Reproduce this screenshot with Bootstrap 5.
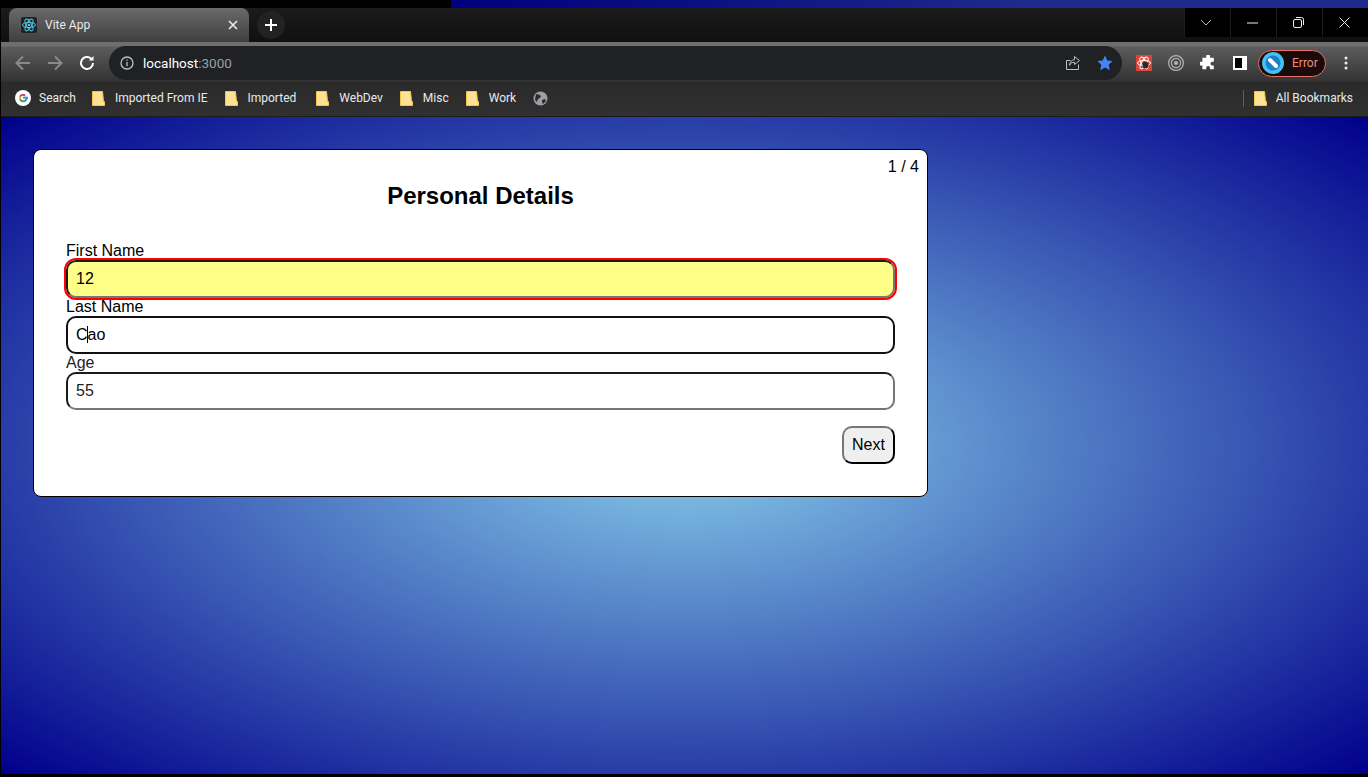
<!DOCTYPE html>
<html lang="en">
<head>
    <meta charset="UTF-8">
    <meta name="viewport" content="width=device-width, initial-scale=1.0">
    <title>Vite App</title>
    <link href="https://cdn.jsdelivr.net/npm/bootstrap@5.3.0/dist/css/bootstrap.min.css" rel="stylesheet">
    <script src="https://cdn.jsdelivr.net/npm/bootstrap@5.3.0/dist/js/bootstrap.bundle.min.js"></script>
    <style>
        html, body { height: 100%; overflow: hidden; background: #000; }
        .screen { height: 777px; padding: 0 0 3px 1px; }
        .chrome-font { font-family: Roboto, "Noto Sans", sans-serif; font-size: 12px; color: #e8eaed; }

        /* desktop strip above the window */
        .desk-strip { height: 8px; margin-left: -1px; }
        .desk-black { width: 451px; background: #000; }
        .desk-blue { background: linear-gradient(90deg, #00007f 0, #0a0f80 25%, #1e2a8c 63%, #1e2a8c 100%); }

        /* tab strip */
        .tab-strip { height: 34px; background: linear-gradient(#1b1b1b, #101010); padding-left: 8px; }
        .tab-item { width: 240px; height: 34px; border-radius: 8px 8px 0 0; background: linear-gradient(#6a6a6a, #3f3f3f); padding: 0 11px 0 12px; }
        .tab-fav { width: 16px; height: 16px; background: #20232a; border-radius: 2px; }
        .tab-title { margin-left: 8px; }
        .new-tab { width: 28px; height: 28px; border-radius: 50%; background: #222; margin: 3px 0 0 8px; }
        .win-btns { height: 29px; background: #000; }
        .win-btn { width: 46px; height: 29px; border-left: 1px solid #1c1c1c; padding-right: 3px; }

        /* toolbar */
        .tool-bar { height: 40px; background: linear-gradient(#6f6f6f 0, #6f6f6f 4px, #5c5c5c 5px, #323232 100%); padding: 4px 0 2px 12px; }
        .tool-ico { width: 20px; height: 20px; }
        .tool-gap { margin-left: 12px; }
        .omni { height: 34px; width: 1013px; border-radius: 17px; background: #202124; margin-left: 12px; padding: 0 9px 0 11px; }
        .omni-host { font-size: 13.5px; margin-left: 9px; color: #fff; }
        .omni-port { color: #9aa0a6; }
        .omni-star { margin-left: 16px; }
        .ext-first { margin-left: 14px; }
        .ext-next { margin-left: 16px; }
        .ext-panel { margin-left: 17px; }
        .profile-pill { width: 68px; height: 27px; border-radius: 14px; background: #1a0a0a; border: 1px solid #e57368; color: #f28b82; padding-left: 3px; margin-left: 11px; }
        .profile-text { margin-left: 8px; }
        .menu-dots { margin-left: 18px; }

        /* bookmarks */
        .bm-bar { height: 35px; background: linear-gradient(#2a2a2a, #303030); border-bottom: 1px solid #1c1c1c; padding: 0 15px 2px 14px; }
        .bm-item { margin-right: 17px; }
        .bm-first { margin-right: 16px; }
        .bm-wide { margin-right: 20px; }
        .bm-name { margin-left: 10px; }
        .bm-all { margin-left: 9px; }
        .bm-search { margin-left: 8px; }
        .bm-sep { width: 1px; height: 17px; background: #5f5f5f; margin-right: 10px; }

        /* page */
        .page-bg { background: radial-gradient(skyblue, darkblue); padding: 32px; }
        .form-card { width: 895px; height: 348px; background: #fff; border: 1px solid #000; border-radius: 8px; padding: 32px; font-family: "Liberation Sans", Arial, sans-serif; color: #000; }
        .step-count { top: 8px; right: 8px; font-size: 16px; line-height: 18px; }
        .form-head { font-size: 24px; font-weight: 700; line-height: 28px; margin: 0 0 32px; }
        .fld-label { font-size: 16px; line-height: 18px; margin: 0; display: block; }
        .fld-input { display: block; width: 100%; height: 38px; font-size: 16px; padding: 0 8px; color: #000; background: #fff; border: 2px solid; border-color: #1a1a1a #767676 #767676 #1a1a1a; border-radius: 10px; outline: none; }
        .fld-bad { background: #ffff88; outline: 2px solid #f00; outline-offset: 0; }
        .fld-focus { border-color: #111; }
        .fld-dim { color: #222; }
        .fld-caret { left: 21px; top: 10px; width: 1px; height: 17px; background: #000; }
        .next-btn { width: 53px; height: 38px; font-size: 16px; padding: 0; color: #000; background: #efefef; border: 2px solid; border-color: #767676 #000 #000 #767676; border-radius: 10px; margin-top: 16px; }
    </style>
</head>
<body>
    <div class="screen d-flex flex-column">
        <div class="desk-strip d-flex flex-shrink-0">
            <div class="desk-black"></div>
            <div class="desk-blue flex-grow-1"></div>
        </div>

        <div class="tab-strip d-flex flex-shrink-0 chrome-font">
            <div class="tab-item d-flex align-items-center">
                <div class="tab-fav d-flex align-items-center justify-content-center">
                    <svg width="16" height="16" viewBox="0 0 16 16" fill="none" stroke="#52c4dc" stroke-width="1">
                        <ellipse cx="8" cy="8" rx="6.5" ry="2.6"/>
                        <ellipse cx="8" cy="8" rx="6.5" ry="2.6" transform="rotate(60 8 8)"/>
                        <ellipse cx="8" cy="8" rx="6.5" ry="2.6" transform="rotate(120 8 8)"/>
                        <circle cx="8" cy="8" r="1.3" fill="#52c4dc" stroke="none"/>
                    </svg>
                </div>
                <span class="tab-title flex-grow-1">Vite App</span>
                <svg width="10" height="10" viewBox="0 0 10 10" stroke="#eee" stroke-width="1.6"><path d="M1 1l8 8M9 1l-8 8"/></svg>
            </div>
            <div class="new-tab d-flex align-items-center justify-content-center">
                <svg width="12" height="12" viewBox="0 0 12 12" stroke="#fff" stroke-width="2"><path d="M6 0v12M0 6h12"/></svg>
            </div>
            <div class="flex-grow-1"></div>
            <div class="win-btns d-flex">
                <div class="win-btn d-flex align-items-center justify-content-center">
                    <svg width="12" height="8" viewBox="0 0 12 8" fill="none" stroke="#bbb"><path d="M1 1l5 5 5-5"/></svg>
                </div>
                <div class="win-btn d-flex align-items-center justify-content-center">
                    <svg width="11" height="2" viewBox="0 0 11 2" stroke="#eee"><path d="M0 1h11"/></svg>
                </div>
                <div class="win-btn d-flex align-items-center justify-content-center">
                    <svg width="11" height="11" viewBox="0 0 11 11" fill="none" stroke="#eee"><rect x=".5" y="2.5" width="8" height="8" rx="1.5"/><path d="M3 .5h5.5a2 2 0 0 1 2 2V8"/></svg>
                </div>
                <div class="win-btn d-flex align-items-center justify-content-center">
                    <svg width="11" height="11" viewBox="0 0 11 11" stroke="#eee"><path d="M.5.500l10 10M10.500.500l-10 10"/></svg>
                </div>
            </div>
        </div>

        <div class="tool-bar d-flex align-items-center flex-shrink-0 chrome-font">
            <svg class="tool-ico" viewBox="0 0 20 20" fill="none" stroke="#8a8a8a" stroke-width="2"><path d="M17 10H3.500M10 3.500L3.500 10l6.500 6.500"/></svg>
            <svg class="tool-ico tool-gap" viewBox="0 0 20 20" fill="none" stroke="#8a8a8a" stroke-width="2"><path d="M3 10h13.500M10 3.500l6.500 6.500-6.500 6.500"/></svg>
            <svg class="tool-ico tool-gap" viewBox="0 0 20 20" fill="none" stroke="#fff" stroke-width="2"><path d="M16 10a6 6 0 1 1-1.800-4.300"/><path d="M16.500 3v4.500H12z" fill="#fff" stroke="none"/></svg>
            <div class="omni d-flex align-items-center">
                <svg width="14" height="14" viewBox="0 0 14 14" fill="none" stroke="#bdc1c6" stroke-width="1.300"><circle cx="7" cy="7" r="6"/><path d="M7 6v4.200M7 3.400v1.400"/></svg>
                <span class="omni-host">localhost<span class="omni-port">:3000</span></span>
                <div class="flex-grow-1"></div>
                <svg width="16" height="16" viewBox="0 0 16 16" fill="none" stroke="#bdc1c6"><path d="M13.500 9.500v5h-12v-9h4"/><path d="M9.500 1.500l5 4-5 4V7.300c-2.500 0-4.200 1-5 3 .2-3 2-5.300 5-5.600z"/></svg>
                <svg class="omni-star" width="16" height="16" viewBox="0 0 16 16" fill="#4285f4"><path d="M8 .5l2.300 5 5.400.6-4 3.700 1.100 5.400L8 12.500l-4.800 2.700 1.100-5.400-4-3.700 5.400-.6z"/></svg>
            </div>
            <svg class="ext-first" width="16" height="16" viewBox="0 0 16 16" fill="none"><rect width="16" height="16" fill="#db4437"/><g stroke="#fff" stroke-width="1"><ellipse cx="8" cy="8" rx="6.500" ry="2.600" transform="rotate(60 8 8)"/><ellipse cx="8" cy="8" rx="6.500" ry="2.600" transform="rotate(120 8 8)"/><ellipse cx="8" cy="8" rx="6.500" ry="2.600"/></g><ellipse cx="9.500" cy="10" rx="3" ry="3.500" fill="#2b2b2b"/></svg>
            <svg class="ext-next" width="16" height="16" viewBox="0 0 16 16" fill="none" stroke="#b4b4b4" stroke-width="1.200"><circle cx="8" cy="8" r="7.400"/><circle cx="8" cy="8" r="4.600"/><circle cx="8" cy="8" r="2" fill="#b4b4b4" stroke="none"/></svg>
            <svg class="ext-next" width="16" height="16" viewBox="0 0 16 16" fill="#fff"><path d="M6 1.500a2 2 0 0 1 4 0V3h4v4h-1.500a2 2 0 0 0 0 4H14v4h-4v-1.500a2 2 0 0 0-4 0V15H2v-4H.5a2 2 0 0 1 0-4H2V3h4z" transform="translate(.5 0) scale(.95)"/></svg>
            <svg class="ext-panel" width="14" height="14" viewBox="0 0 14 14"><rect width="14" height="14" fill="#fff"/><rect x="2" y="2" width="7" height="10" fill="#000"/></svg>
            <div class="profile-pill d-flex align-items-center">
                <svg width="22" height="22" viewBox="0 0 22 22"><circle cx="11" cy="11" r="11" fill="#45c0f5"/><circle cx="11" cy="11" r="7.500" fill="#1a7fc4"/><path d="M8 8l6 6" stroke="#fff" stroke-width="4" stroke-linecap="round"/></svg>
                <span class="profile-text">Error</span>
            </div>
            <svg class="menu-dots" width="4" height="14" viewBox="0 0 4 14" fill="#eee"><circle cx="2" cy="2" r="1.500"/><circle cx="2" cy="7" r="1.500"/><circle cx="2" cy="12" r="1.500"/></svg>
        </div>

        <div class="bm-bar d-flex align-items-center flex-shrink-0 chrome-font">
            <div class="bm-first d-flex align-items-center">
                <svg width="16" height="16" viewBox="0 0 16 16"><circle cx="8" cy="8" r="8" fill="#fff"/><path d="M8 6.800h5c.3 2.700-1.600 5.200-5 5.200a4 4 0 1 1 2.700-7l-1.200 1.200A2.300 2.300 0 0 0 8 5.600 2.400 2.400 0 0 0 8 10.400c1.300 0 2.200-.7 2.500-1.900H8z" fill="#4285f4"/><path d="M4.500 6.100A4 4 0 0 1 10.700 5L9.500 6.200A2.300 2.300 0 0 0 5.900 7z" fill="#ea4335"/><path d="M4.500 6.100L5.900 7a2.400 2.400 0 0 0 0 2L4.500 10a4 4 0 0 1 0-3.900z" fill="#fbbc05"/><path d="M4.500 10L5.900 9A2.400 2.400 0 0 0 9.600 10l1.300 1a4 4 0 0 1-6.400-1z" fill="#34a853"/></svg>
                <span class="bm-search">Search</span>
            </div>
            <div class="bm-item d-flex align-items-center">
                <svg width="13" height="15" viewBox="0 0 13 15"><path d="M.5.500h10l1 10h1v4H.5z" fill="#fde293" stroke="#f3c64c"/></svg>
                <span class="bm-name">Imported From IE</span>
            </div>
            <div class="bm-wide d-flex align-items-center">
                <svg width="13" height="15" viewBox="0 0 13 15"><path d="M.5.500h10l1 10h1v4H.5z" fill="#fde293" stroke="#f3c64c"/></svg>
                <span class="bm-name">Imported</span>
            </div>
            <div class="bm-item d-flex align-items-center">
                <svg width="13" height="15" viewBox="0 0 13 15"><path d="M.5.500h10l1 10h1v4H.5z" fill="#fde293" stroke="#f3c64c"/></svg>
                <span class="bm-name">WebDev</span>
            </div>
            <div class="bm-item d-flex align-items-center">
                <svg width="13" height="15" viewBox="0 0 13 15"><path d="M.5.500h10l1 10h1v4H.5z" fill="#fde293" stroke="#f3c64c"/></svg>
                <span class="bm-name">Misc</span>
            </div>
            <div class="bm-item d-flex align-items-center">
                <svg width="13" height="15" viewBox="0 0 13 15"><path d="M.5.500h10l1 10h1v4H.5z" fill="#fde293" stroke="#f3c64c"/></svg>
                <span class="bm-name">Work</span>
            </div>
            <svg width="15" height="15" viewBox="0 0 15 15"><circle cx="7.500" cy="7.500" r="7" fill="#9aa0a6"/><path d="M3 3l4 1 1 2-3 2-1 3-2-2zM9 9l3-1 1 2-3 3-1-2z" fill="#2c2c2c"/></svg>
            <div class="flex-grow-1"></div>
            <div class="bm-sep"></div>
            <svg width="13" height="15" viewBox="0 0 13 15"><path d="M.5.500h10l1 10h1v4H.5z" fill="#fde293" stroke="#f3c64c"/></svg>
            <span class="bm-all">All Bookmarks</span>
        </div>

        <div class="page-bg flex-grow-1">
            <form class="form-card position-relative">
                <div class="step-count position-absolute">1 / 4</div>
                <h1 class="form-head text-center">Personal Details</h1>
                <label class="fld-label" for="firstName">First Name</label>
                <input class="fld-input fld-bad" id="firstName" type="text" value="12">
                <label class="fld-label" for="lastName">Last Name</label>
                <div class="position-relative">
                    <input class="fld-input fld-focus" id="lastName" type="text" value="Cao">
                    <span class="fld-caret position-absolute"></span>
                </div>
                <label class="fld-label fld-dim" for="age">Age</label>
                <input class="fld-input fld-dim" id="age" type="text" value="55">
                <div class="d-flex justify-content-end">
                    <button class="next-btn" type="button">Next</button>
                </div>
            </form>
        </div>
    </div>
</body>
</html>
